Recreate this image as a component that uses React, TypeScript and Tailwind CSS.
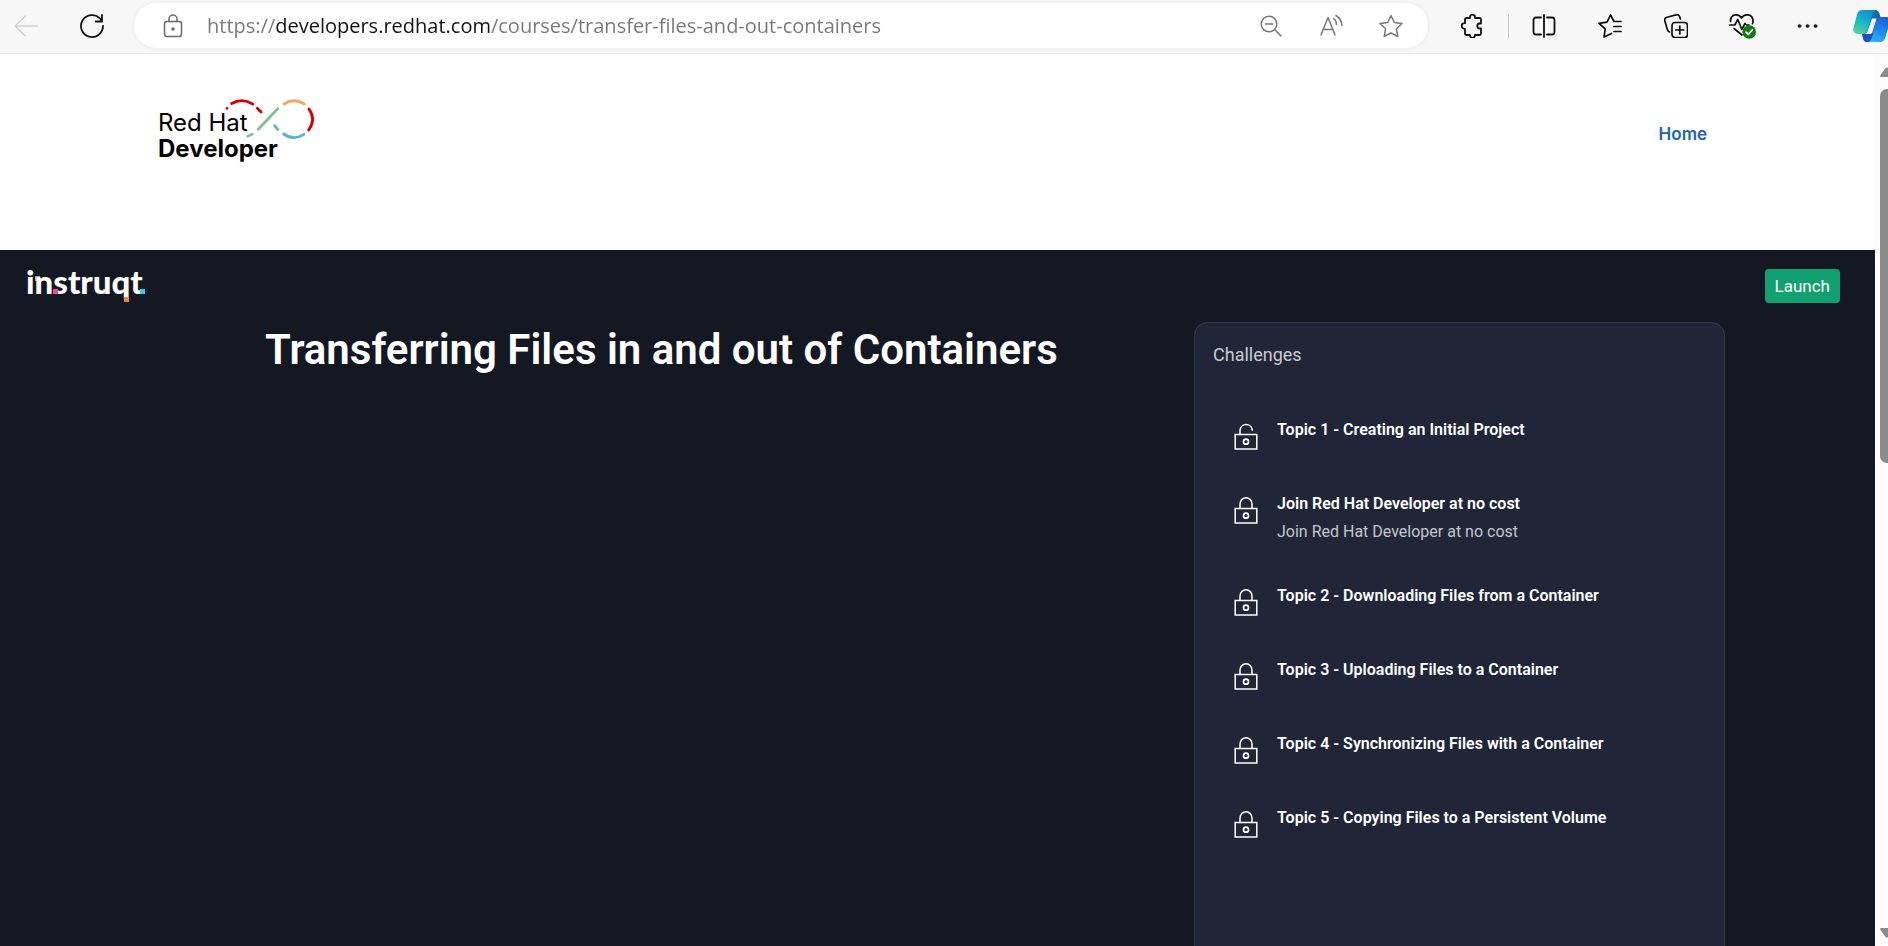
import React from "react";

type Stroke = { children: React.ReactNode; width?: number };

function Glyph({ children, width = 1.6 }: Stroke) {
  return (
    <svg
      viewBox="0 0 24 24"
      className="size-6 shrink-0"
      fill="none"
      stroke="currentColor"
      strokeWidth={width}
      strokeLinecap="round"
      strokeLinejoin="round"
      aria-hidden="true"
    >
      {children}
    </svg>
  );
}

function ToolButton({ label, children, tone = "text-[#111111]" }: { label: string; children: React.ReactNode; tone?: string }) {
  return (
    <button type="button" aria-label={label} className={`flex size-6 shrink-0 items-center justify-center ${tone}`}>
      {children}
    </button>
  );
}

function CopilotLogo() {
  return (
    <svg viewBox="0 0 40 34" className="h-[34px] w-10 shrink-0" aria-hidden="true">
      <defs>
        <linearGradient id="cpA" x1="0.6" y1="0" x2="0.2" y2="1">
          <stop offset="0" stopColor="#0f8fc4" />
          <stop offset="0.45" stopColor="#17b3cf" />
          <stop offset="1" stopColor="#52d78f" />
        </linearGradient>
        <linearGradient id="cpB" x1="0.7" y1="0" x2="0.3" y2="1">
          <stop offset="0" stopColor="#1b5fd0" />
          <stop offset="0.5" stopColor="#1f86f0" />
          <stop offset="1" stopColor="#2bb4fb" />
        </linearGradient>
        <linearGradient id="cpC" x1="0" y1="0" x2="1" y2="1">
          <stop offset="0" stopColor="#1279b5" />
          <stop offset="1" stopColor="#0b4f97" />
        </linearGradient>
      </defs>
      <path d="M18 1h4.500c2 0 3.200 1.300 3.800 3.200L27.500 8h5c3 0 4.500 2 3.600 5L32 28c-1 3.500-2.800 5-6 5H14c-2 0-3-1.300-3.600-3.200L9 25H5l12-16z" fill="url(#cpC)" />
      <path d="M26 8h6.500c3.500 0 5.200 2 4.200 5.500L32.500 28c-1 3.500-3 5-6 5H14c3 0 4.300-2 5.200-5L23 13c.8-3 1.500-5 3-5z" fill="url(#cpB)" />
      <path d="M9 24h8l-1.500 6c-.5 2-1.500 3-2.800 3-1.600-.4-2.200-2-2.700-4z" fill="#1d4ed8" />
      <path d="M9.500 1H23c-2.500.5-3.400 2.500-4 4.800L14.500 21c-.8 2.700-2 4-5 4H5C1.200 25-.5 22.500.5 19L4 5.500C5 2.300 6.500 1 9.500 1z" fill="url(#cpA)" />
      <path d="M19 9.500h4.500L19.500 23c-.5 1.500-1.200 2-3 2H12c1.700-.6 2.300-2 2.800-3.700z" fill="#f7f7f7" />
    </svg>
  );
}

function BrowserBar() {
  return (
    <div className="flex h-[54px] shrink-0 items-start overflow-hidden border-b border-[#e6e6e6] bg-[#f7f7f7] pt-[3px]">
      <div className="flex h-[45px] shrink-0 items-center gap-[42px] pr-[30px] pl-[14px]">
        <ToolButton label="Back" tone="text-[#cfcfcf]">
          <Glyph width={1.4}>
            <path d="M23.500 12H1M11.500 2 1 12l10.500 10" />
          </Glyph>
        </ToolButton>
        <ToolButton label="Refresh">
          <Glyph width={1.8}>
            <path d="M23 11.800A11 11 0 1 1 20.200 4.700L22 7.300M22 1v6.500h-6.300" />
          </Glyph>
        </ToolButton>
      </div>
      <div className="flex h-[45px] min-w-0 flex-1 items-center rounded-full bg-white pr-[25px] pl-[27px] shadow-[0_0_5px_rgba(0,0,0,0.07)]">
        <ToolButton label="View site information" tone="text-[#6b6b6b]">
          <Glyph width={1.5}>
            <rect x="3.500" y="7.500" width="17" height="15" rx="2.500" />
            <path d="M8 7.500V5a4 4 0 0 1 8 0v2.500" />
            <circle cx="12" cy="15" r="1" fill="currentColor" />
          </Glyph>
        </ToolButton>
        <input
          type="text"
          aria-label="Address"
          defaultValue="https://developers.redhat.com/courses/transfer-files-and-out-containers"
          className="ml-[22px] h-9 min-w-0 flex-1 bg-[linear-gradient(90deg,#767676_68px,#111111_68px,#111111_283px,#767676_283px)] bg-clip-text font-['Open_Sans','Noto_Sans',sans-serif] text-xl leading-9 text-transparent outline-none"
        />
        <div className="flex items-center gap-9">
          <ToolButton label="Zoom" tone="text-[#767676]">
            <Glyph width={1.5}>
              <circle cx="10" cy="10" r="7.800" />
              <path d="M15.800 15.800 22 22M6.500 10h7" />
            </Glyph>
          </ToolButton>
          <ToolButton label="Read aloud" tone="text-[#767676]">
            <Glyph width={1.5}>
              <path d="M2 21 9 3.500 16 21M4.500 15.500h9M14.500 4.500q3 2 3 6M17 1.500q5.500 3.500 6 10" />
            </Glyph>
          </ToolButton>
          <ToolButton label="Add to favorites" tone="text-[#767676]">
            <Glyph width={1.5}>
              <path d="m12 1.500 3.300 7 7.700 1-5.600 5.300 1.400 7.700L12 18.800l-6.800 3.700 1.400-7.700L1 9.500l7.700-1z" />
            </Glyph>
          </ToolButton>
        </div>
      </div>
      <div className="flex h-[45px] shrink-0 items-center pl-8">
        <ToolButton label="Extensions">
          <Glyph width={1.8}>
            <path d="M5.500 4H9V3.200a2.500 2.500 0 0 1 5 0V4h4.500A1.500 1.500 0 0 1 20 5.500v4h-1.200a2.500 2.500 0 0 0 0 5H20v5a1.500 1.500 0 0 1-1.500 1.500H14v.3a2.500 2.500 0 0 1-5 0V21H5.500A1.500 1.500 0 0 1 4 19.500v-4.700h-.5a2.800 2.800 0 0 1 0-5.600H4V5.500A1.500 1.500 0 0 1 5.500 4z" transform="translate(1 0)" />
          </Glyph>
        </ToolButton>
        <span className="mr-[23px] ml-6 h-6 w-px bg-[#c6c6c6]" />
        <div className="flex items-center gap-[42px]">
          <ToolButton label="Split screen">
            <Glyph width={1.8}>
              <path d="M12 1v22M9 3.500H4A2.500 2.500 0 0 0 1.500 6v12A2.500 2.500 0 0 0 4 20.500h5M15 3.500h5A2.500 2.500 0 0 1 22.500 6v12a2.500 2.500 0 0 1-2.500 2.500h-5" />
            </Glyph>
          </ToolButton>
          <ToolButton label="Favorites">
            <Glyph width={1.7}>
              <path d="M13.500 19.500 6 23l1.300-8L1 9.300 9 8.200 12.500 1l3.600 6.500H23M16 12.500h7M16 17.500h7" />
            </Glyph>
          </ToolButton>
          <ToolButton label="Collections">
            <Glyph width={1.7}>
              <rect x="8" y="8.500" width="15.500" height="15" rx="3" />
              <path d="M15.800 12v8M11.800 16h8M5.500 18C4 17.500 3.600 16.500 3.300 15.500L.8 6.800C.3 5 1.300 3.700 3 3.200L12 .9c2-.5 3.300.4 3.800 2l.6 2" />
            </Glyph>
          </ToolButton>
          <ToolButton label="Browser essentials">
            <svg viewBox="-1 0 28 26" className="h-[26px] w-7 shrink-0" fill="none" stroke="currentColor" strokeWidth="1.700" strokeLinecap="round" strokeLinejoin="round" aria-hidden="true">
              <path d="M1.500 8.500C1.500 0 10 .5 12.500 5 15 .5 24 0 24 8.500c0 .8-.2 1.500-.5 2.200M.8 12h5l3-5.500 4 10 3.200-6 1.500 1.500H20M5 15.500l8 6.500" />
              <circle cx="20.200" cy="19" r="6.800" fill="#107c10" stroke="none" />
              <path d="m17 19.200 2.300 2.200 4-4.400" stroke="#ffffff" />
            </svg>
          </ToolButton>
          <ToolButton label="Settings and more">
            <Glyph width={0.5}>
              <g fill="currentColor">
                <circle cx="3.500" cy="12" r="1.600" />
                <circle cx="11.500" cy="12" r="1.600" />
                <circle cx="19.500" cy="12" r="1.600" />
              </g>
            </Glyph>
          </ToolButton>
        </div>
        <button type="button" aria-label="Copilot" className="-mr-[5px] ml-[33px] shrink-0">
          <CopilotLogo />
        </button>
      </div>
    </div>
  );
}

function RedHatDeveloperLogo() {
  return (
    <svg viewBox="0 0 160 68" className="h-[68px] w-40" role="img" aria-label="Red Hat Developer">
      <g fill="#000000" fontFamily="Inter, sans-serif">
        <text x="2" y="35" fontSize="24">Red Hat</text>
        <text x="2" y="61" fontSize="24" fontWeight="700">Developer</text>
      </g>
      <g fill="none" strokeWidth="2.800" strokeLinecap="round">
        <g stroke="#d40000">
          <path d="M71 12.300h.1M75.700 7.500Q86 1.500 96.700 8M101.300 12.300l3.700 3.700M153 13q7.300 10.500-.3 21" />
        </g>
        <path d="M102.300 33.300 121.700 12.700M91.700 40.300l4.600-2" stroke="#83bf9c" />
        <path d="M128 8q10-6.500 20.300 0" stroke="#efab5b" />
        <path d="M127.700 38q10.300 7 20.300.3M118.700 29.700l3 3.600" stroke="#55b3cf" />
      </g>
    </svg>
  );
}

function InstruqtLogo() {
  return (
    <svg viewBox="0 0 124 40" className="h-10 w-[124px] overflow-visible" role="img" aria-label="instruqt">
      <path d="M9 13h5v5h-5zM77 26h5v5h-5z" fill="#a78bfa" />
      <text x="0" y="31" fontSize="33" fontWeight="900" fontFamily="Lato, sans-serif" fill="#ffffff">instruqt</text>
      <path d="M27 26h5v5h-5z" fill="#f0499b" />
      <path d="M98 34h5v5h-5z" fill="#e8893a" />
      <path d="M114 26h5v5h-5z" fill="#22d3ee" />
    </svg>
  );
}

function Padlock({ open }: { open: boolean }) {
  return (
    <svg viewBox="0 0 24 28" className="h-7 w-6 shrink-0" fill="none" stroke="#ffffff" strokeWidth="1.500" aria-hidden="true">
      <rect x="1.200" y="12.500" width="21.600" height="14.500" />
      <circle cx="12" cy="19.700" r="2.500" strokeWidth="1.700" />
      <path d={open ? "M6 12.500V8a6.200 6.200 0 0 1 12.300 0v.8" : "M6 12.500V8a6 6.200 0 0 1 12 0v4.500"} />
    </svg>
  );
}

const challenges = [
  { title: "Topic 1 - Creating an Initial Project", open: true },
  { title: "Join Red Hat Developer at no cost", teaser: "Join Red Hat Developer at no cost", open: false },
  { title: "Topic 2 - Downloading Files from a Container", open: false },
  { title: "Topic 3 - Uploading Files to a Container", open: false },
  { title: "Topic 4 - Synchronizing Files with a Container", open: false },
  { title: "Topic 5 - Copying Files to a Persistent Volume", open: false },
];

function ChallengeCard() {
  return (
    <section className="w-[531px] shrink-0 rounded-t-[14px] border border-b-0 border-[#353c4c] bg-[#202637] px-[18px] pt-[18px]">
      <h2 className="text-lg leading-7 font-normal text-[#cbccd1]">Challenges</h2>
      <ul className="mt-12 flex flex-col gap-[38px] pl-[21px]">
        {challenges.map((item) => (
          <li key={item.title} className="flex min-h-9 gap-[19px]">
            <span className="pt-[5px]">
              <Padlock open={item.open} />
            </span>
            <div>
              <h3 className="text-base leading-[26px] font-semibold text-white">{item.title}</h3>
              {item.teaser && <p className="pt-[2px] text-base leading-[26px] text-[#c4c6cc]">{item.teaser}</p>}
            </div>
          </li>
        ))}
      </ul>
    </section>
  );
}

function Scrollbar() {
  return (
    <div className="flex w-[13px] shrink-0 flex-col overflow-hidden bg-[#fcfcfc] pt-[13px] pb-2 pl-[5px]" aria-hidden="true">
      <svg viewBox="0 0 16 10" className="h-[10px] w-4 shrink-0">
        <path d="M1 10Q-.5 10 .5 8L5.500 1Q7 0 8.500 1L14 8q1 2-.5 2z" fill="#8b8b8b" />
      </svg>
      <div className="mt-3 h-[374px] w-4 shrink-0 rounded-[7px] bg-[#8b8b8b]" />
      <svg viewBox="0 0 16 10" className="mt-auto h-[10px] w-4 shrink-0">
        <path d="M1 0Q-.5 0 .5 2l5 7q1.500 1 3 0L14 2q1-2-.5-2z" fill="#8b8b8b" />
      </svg>
    </div>
  );
}

export default function App() {
  return (
    <div className="flex h-screen flex-col overflow-hidden bg-white font-['Inter',sans-serif]">
      <BrowserBar />
      <div className="flex min-h-0 flex-1">
        <div className="flex min-w-0 flex-1 flex-col overflow-hidden">
          <header className="flex h-[196px] shrink-0 items-start justify-between pt-[42px] pr-[168px] pl-[156px]">
            <a href="#top">
              <RedHatDeveloperLogo />
            </a>
            <nav className="pt-[26px]">
              <a href="#home" className="text-[17px] leading-6 font-semibold text-[#1f62bd]">
                Home
              </a>
            </nav>
          </header>
          <main className="flex flex-1 flex-col bg-[#141822] font-['Roboto',sans-serif]">
            <div className="flex h-[72px] items-start justify-between pt-[19px] pr-[35px] pl-[26px]">
              <span className="-mt-[6px]">
                <InstruqtLogo />
              </span>
              <button type="button" className="h-[34px] rounded bg-[#11a06f] px-[10px] text-[17px] leading-6 text-white">
                Launch
              </button>
            </div>
            <div className="flex flex-1 justify-between pr-[150px] pl-[265px]">
              <h1 className="text-[42px] leading-[56px] font-semibold whitespace-nowrap text-white">
                Transferring Files in and out of Containers
              </h1>
              <ChallengeCard />
            </div>
          </main>
        </div>
        <Scrollbar />
      </div>
    </div>
  );
}
